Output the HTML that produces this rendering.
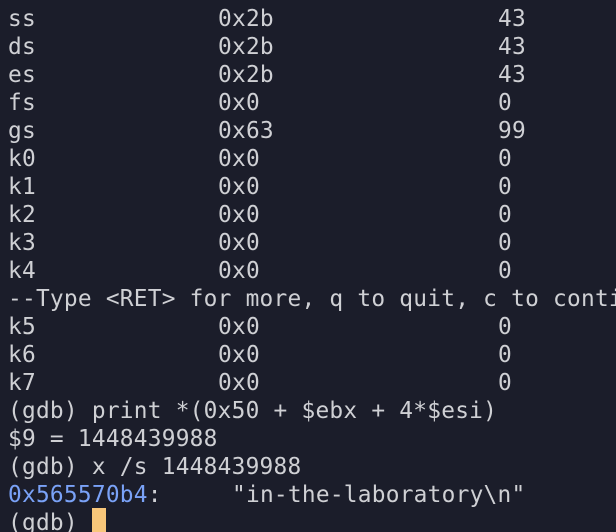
<!DOCTYPE html>
<html><head><meta charset="utf-8"><style>
html,body{margin:0;padding:0;background:#1b1d2a;width:616px;height:532px;overflow:hidden;position:relative}
.l{position:absolute;left:8px;width:608px;overflow:hidden;height:28px;line-height:28px;font-family:"DejaVu Sans Mono","Liberation Mono",monospace;font-size:22.8px;letter-spacing:0.25px;color:#cfd0d4;white-space:pre}
.c2{position:absolute;left:210px}
.c3{position:absolute;left:490px}
.b{color:#7aa2f7}
.cur{position:absolute;left:92px;top:508px;width:14px;height:24px;background:#f8c77a}
</style></head><body>
<div class="l" style="top:5px">ss<span class="c2">0x2b</span><span class="c3">43</span></div>
<div class="l" style="top:33px">ds<span class="c2">0x2b</span><span class="c3">43</span></div>
<div class="l" style="top:61px">es<span class="c2">0x2b</span><span class="c3">43</span></div>
<div class="l" style="top:89px">fs<span class="c2">0x0</span><span class="c3">0</span></div>
<div class="l" style="top:117px">gs<span class="c2">0x63</span><span class="c3">99</span></div>
<div class="l" style="top:145px">k0<span class="c2">0x0</span><span class="c3">0</span></div>
<div class="l" style="top:173px">k1<span class="c2">0x0</span><span class="c3">0</span></div>
<div class="l" style="top:201px">k2<span class="c2">0x0</span><span class="c3">0</span></div>
<div class="l" style="top:229px">k3<span class="c2">0x0</span><span class="c3">0</span></div>
<div class="l" style="top:257px">k4<span class="c2">0x0</span><span class="c3">0</span></div>
<div class="l" style="top:285px">--Type &lt;RET&gt; for more, q to quit, c to conti</div>
<div class="l" style="top:313px">k5<span class="c2">0x0</span><span class="c3">0</span></div>
<div class="l" style="top:341px">k6<span class="c2">0x0</span><span class="c3">0</span></div>
<div class="l" style="top:369px">k7<span class="c2">0x0</span><span class="c3">0</span></div>
<div class="l" style="top:397px">(gdb) print *(0x50 + $ebx + 4*$esi)</div>
<div class="l" style="top:425px">$9 = 1448439988</div>
<div class="l" style="top:453px">(gdb) x /s 1448439988</div>
<div class="l" style="top:481px"><span class="b">0x565570b4</span>:<span style="position:absolute;left:224px">"in-the-laboratory\n"</span></div>
<div class="l" style="top:509px">(gdb) </div>
<div class="cur"></div>
</body></html>
